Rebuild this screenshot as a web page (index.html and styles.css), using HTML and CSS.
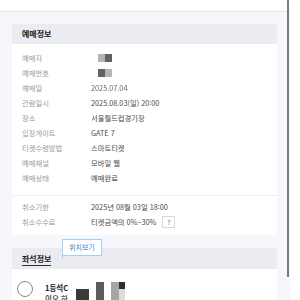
FILE: index.html
```html
<!DOCTYPE html>
<html lang="ko">

<head>
    <meta charset="UTF-8">
    <meta name="viewport" content="width=device-width, initial-scale=1.0">
    <title>예매상세</title>

    <link rel="stylesheet" href="styles.css">
</head>

<body>

    <div class="page">
        <div class="topbar"></div>

        <div class="content">
            <!-- Booking Info -->
            <div class="card">
                <h2 class="card-title">예매정보</h2>

                <div class="rows">
                    <div class="row"><span class="label">예매자</span><span class="mosaic"><i class="m-light"></i><i class="m-dark"></i></span></div>
                    <div class="row"><span class="label">예매번호</span><span class="mosaic"><i class="m-dark"></i><i class="m-light"></i></span></div>
                    <div class="row"><span class="label">예매일</span><span class="value blur">2025.07.04</span></div>
                    <div class="row"><span class="label">관람일시</span><span class="value">2025.08.03(일) 20:00</span></div>
                    <div class="row"><span class="label">장소</span><span class="value">서울월드컵경기장</span></div>
                    <div class="row"><span class="label">입장게이트</span><span class="value">GATE 7</span></div>
                    <div class="row"><span class="label">티켓수령방법</span><span class="value">스마트티켓</span></div>
                    <div class="row"><span class="label">예매채널</span><span class="value">모바일 웹</span></div>
                    <div class="row"><span class="label">예매상태</span><span class="value">예매완료</span></div>
                </div>

                <div class="rows rows-cancel">
                    <div class="row"><span class="label">취소기한</span><span class="value">2025년 08월 03일 18:00</span></div>
                    <div class="row"><span class="label">취소수수료</span><span class="value">티켓금액의 0%~30%</span><span class="help">?</span></div>
                </div>
            </div>

            <!-- Seat Info -->
            <div class="card seat-card">
                <span class="tooltip">위치보기</span>
                <h2 class="card-title"><span class="underline">좌석정보</span></h2>

                <div class="seat-item">
                    <span class="radio"></span>
                    <div class="seat-text">
                        <div class="seat-grade">1등석C</div>
                        <div class="seat-sub">이오 하</div>
                    </div>
                    <div class="seat-mosaic">
                        <i class="b1"></i>
                        <i class="b2"></i>
                        <i class="b3"></i>
                        <i class="b4"></i>
                        <i class="b5"></i>
                    </div>
                </div>
            </div>
        </div>
    </div>

    <div class="gutter"></div>
    <div class="scroll-thumb"></div>

</body>

</html>
```

FILE: styles.css
```css
/* General Styling */
body {
    font-family: 'Noto Sans CJK KR', 'Noto Sans', sans-serif;
    margin: 0;
    padding: 0;
    width: 300px;
    height: 300px;
    overflow: hidden;
    display: flex;
    background-color: #ffffff;
    color: #444444;
}

.page {
    width: 290px;
    height: 300px;
    background-color: #f5f7fa;
    overflow: hidden;
}

.gutter {
    flex: 1;
    background-color: #ffffff;
}

.scroll-thumb {
    position: absolute;
    left: 287px;
    top: 0;
    width: 2px;
    height: 277px;
    background-color: #7b7b7b;
}

.topbar {
    height: 11px;
    background-color: #ffffff;
    border-bottom: 1px solid #e2e5e9;
}

.content {
    padding: 12px 13px 0 12px;
}

/* Card */
.card {
    background-color: #ffffff;
}

.card-title {
    margin: 0;
    height: 20px;
    line-height: 20px;
    padding-left: 10px;
    background-color: #ebecf1;
    font-size: 8px;
    font-weight: 700;
    color: #222222;
}

.rows {
    padding: 6px 0 10px;
    border-bottom: 1px solid #eeeeee;
}

.rows-cancel {
    padding: 3px 0 6px;
    border-bottom: none;
}

.row {
    display: flex;
    align-items: center;
    height: 15px;
    font-size: 7.3px;
}

.label {
    width: 69px;
    padding-left: 10px;
    color: #9a9a9a;
    flex-shrink: 0;
}

.value {
    color: #4a4a4a;
}

.blur {
    color: #666666;
    filter: blur(0.3px);
}

.mosaic {
    display: flex;
    margin-left: 7px;
}

.mosaic i {
    width: 7px;
    height: 8px;
}

.m-light {
    background-color: #b4b4b8;
}

.m-dark {
    background-color: #616166;
}

.help {
    margin-left: 6px;
    width: 11px;
    height: 10px;
    border: 1px solid #d8d8d8;
    font-size: 6.5px;
    line-height: 10px;
    text-align: center;
    color: #666666;
}

/* Seat Card */
.seat-card {
    position: relative;
    margin-top: 13px;
    height: 60px;
}

.seat-card .card-title {
    height: 21px;
    line-height: 21px;
}

.underline {
    border-bottom: 1px solid #333333;
    padding-bottom: 1px;
}

.tooltip {
    position: absolute;
    left: 50px;
    top: -9px;
    padding: 0 6px;
    height: 15px;
    line-height: 15px;
    border: 1px solid #9fd2ee;
    background-color: #ffffff;
    font-size: 7px;
    color: #3f86c4;
    z-index: 1;
}

.tooltip::after {
    content: "";
    position: absolute;
    left: -1px;
    bottom: -4px;
    width: 1px;
    height: 4px;
    background-color: #9fd2ee;
}

.seat-item {
    display: flex;
    padding: 12px 0 0 5px;
}

.radio {
    width: 14px;
    height: 14px;
    border: 1px solid #8a8a8a;
    border-radius: 50%;
    flex-shrink: 0;
}

.seat-text {
    margin-left: 12px;
    font-size: 7.5px;
    font-weight: 700;
    color: #222222;
    line-height: 11px;
    padding-top: 1px;
}

.seat-sub {
    color: #555555;
}

.seat-mosaic {
    display: grid;
    grid-template-columns: 13px 7px 8px 7px 8px 6px;
    grid-template-rows: 7px 12px;
    margin-left: 8px;
    margin-top: 1px;
}

.seat-mosaic i {
    display: block;
}

.b1 {
    grid-column: 1;
    grid-row: 2;
    background-color: #3a3a3a;
}

.b2 {
    grid-column: 3;
    grid-row: 1 / 3;
    background-color: #5c5c5c;
}

.b3 {
    grid-column: 5;
    grid-row: 1 / 3;
    background-color: #a6a6a6;
}

.b4 {
    grid-column: 6;
    grid-row: 1;
    background-color: #2e2e2e;
}

.b5 {
    grid-column: 6;
    grid-row: 2;
    background-color: #dcdcdc;
}
```
